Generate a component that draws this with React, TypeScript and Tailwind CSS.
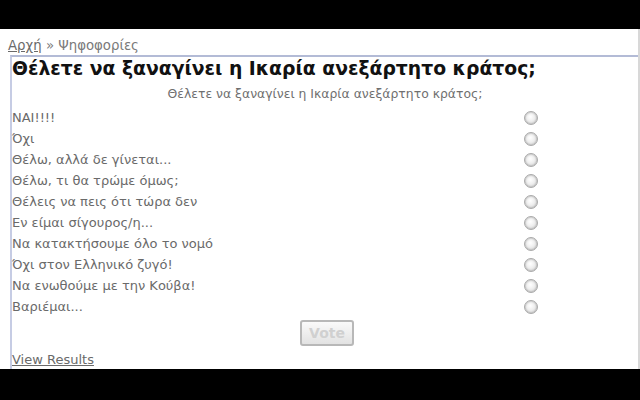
const options = [
  "ΝΑΙ!!!!",
  "Όχι",
  "Θέλω, αλλά δε γίνεται...",
  "Θέλω, τι θα τρώμε όμως;",
  "Θέλεις να πεις ότι τώρα δεν",
  "Εν είμαι σίγουρος/η...",
  "Να κατακτήσουμε όλο το νομό",
  "Όχι στον Ελληνικό ζυγό!",
  "Να ενωθούμε με την Κούβα!",
  "Βαριέμαι...",
];

const Radio = () => (
  <span className="block w-[14px] h-[14px] rounded-full border border-[#a9a9a9] bg-[radial-gradient(circle_at_45%_40%,#ffffff_0%,#eeeeee_45%,#cfcfcf_100%)] shadow-[inset_0_0_2px_#999]" />
);

export default function App() {
  return (
    <div className="w-[640px] h-[400px] bg-black flex flex-col font-['DejaVu_Sans',sans-serif]">
      <div className="h-[29px]" />
      <div className="h-[340px] bg-white border-r-2 border-[#d8d8d8] flex flex-col overflow-hidden">
        <div className="h-[26px] pt-[9px] pl-[8px] text-[13.3px] leading-[16px] text-[#7a7a7a]">
          <span className="underline text-[#6a6a6a]">Αρχή</span> » Ψηφοφορίες
        </div>
        <div className="flex-1 ml-[10px] border-t-2 border-l-2 border-[#b3bbd6] border-l-[#c6cce4] flex flex-col">
          <h1 className="text-[18.8px] leading-[24px] font-bold text-[#111]">
            Θέλετε να ξαναγίνει η Ικαρία ανεξάρτητο κράτος;
          </h1>
          <div className="mt-[5px] text-center text-[12.4px] leading-[16px] text-[#6f6f6f]">
            Θέλετε να ξαναγίνει η Ικαρία ανεξάρτητο κράτος;
          </div>
          <div className="flex flex-col mt-[5px]">
            {options.map((o) => (
              <div key={o} className="h-[21px] flex items-center justify-between pr-[100px]">
                <span className="text-[13px] text-[#6a6a6a]">{o}</span>
                <Radio />
              </div>
            ))}
          </div>
          <div className="flex justify-center mt-[3px] pl-[4px]">
            <button className="w-[54px] h-[26px] rounded-[3px] border-2 border-[#b8b8b8] bg-[linear-gradient(#fafafa,#e2e2e2)] text-[14px] font-bold text-[#d0d0d0]">
              Vote
            </button>
          </div>
          <div className="mt-[6px] text-[13px] text-[#6a6a6a] underline leading-[16px]">View Results</div>
        </div>
      </div>
    </div>
  );
}
